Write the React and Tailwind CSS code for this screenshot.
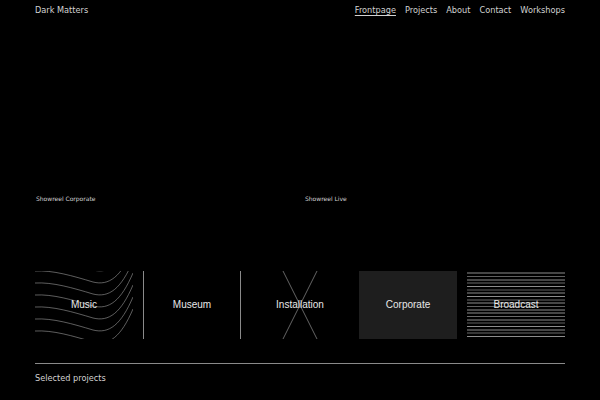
import React from "react";

const font = { fontFamily: '"DejaVu Sans", Verdana, sans-serif' };

const navItems = ["Frontpage", "Projects", "About", "Contact", "Workshops"];

const waveOffsets = [-48, -36, -24, -12, 0, 12, 24, 36, 48, 60];
const broadcastLines = [
  [2, "#c8c8c8"], [5.5, "#8a8a8a"], [9, "#c8c8c8"], [12, "#9a9a9a"], [15.5, "#c8c8c8"],
  [19, "#8a8a8a"], [22, "#c8c8c8"], [25.5, "#c8c8c8"], [29, "#9a9a9a"], [32, "#c8c8c8"],
  [35.5, "#8a8a8a"], [39, "#c8c8c8"], [42, "#c8c8c8"], [45.5, "#9a9a9a"], [49, "#c8c8c8"],
  [52, "#8a8a8a"], [55.5, "#c8c8c8"], [59, "#c8c8c8"], [62, "#9a9a9a"], [65.5, "#c8c8c8"],
];

const Waves = () => (
  <svg viewBox="0 0 98 68" className="absolute inset-0 w-full h-full" preserveAspectRatio="none">
    {waveOffsets.map((k) => (
      <path
        key={k}
        d={`M0,${k} C18,${k - 1} 38,${k + 5} 58,${k + 11} C74,${k + 15} 86,${k + 6} 98,${k - 22}`}
        fill="none"
        stroke="#9c9c9c"
        strokeWidth="0.6"
      />
    ))}
  </svg>
);

const Cross = () => (
  <svg viewBox="0 0 98 68" className="absolute inset-0 w-full h-full" preserveAspectRatio="none">
    <line x1="32" y1="0" x2="66" y2="68" stroke="#8f8f8f" strokeWidth="0.7" />
    <line x1="66" y1="0" x2="32" y2="68" stroke="#8f8f8f" strokeWidth="0.7" />
  </svg>
);

const Stripes = () => (
  <svg viewBox="0 0 98 68" className="absolute inset-0 w-full h-full" preserveAspectRatio="none">
    {broadcastLines.map(([y, c]) => (
      <line key={y} x1="0" y1={y} x2="98" y2={y} stroke={c} strokeWidth="0.7" />
    ))}
  </svg>
);

const Tile = ({ label, children, className = "" }) => (
  <div className={`relative h-[68px] flex items-center justify-center overflow-hidden ${className}`}>
    {children}
    <span className="relative text-[10px] leading-[12px] -mt-px text-[#e8e8e8]" style={{ fontFamily: '"Liberation Sans", Arial, sans-serif' }}>
      {label}
    </span>
  </div>
);

export default function App() {
  return (
    <div className="w-[600px] h-[400px] bg-black overflow-hidden px-[35px] text-[#d2d2d2]" style={font}>
      <header className="h-5 flex items-center justify-between text-[8.2px]">
        <div>Dark Matters</div>
        <nav className="flex gap-[9px]">
          {navItems.map((item, i) => (
            <a key={item} className={i === 0 ? "underline underline-offset-2" : ""}>
              {item}
            </a>
          ))}
        </nav>
      </header>

      <section className="grid grid-cols-2 gap-[10px]">
        <div>
          <div className="h-[174px] bg-black" />
          <div className="text-[6px] leading-[10px] pl-px">Showreel Corporate</div>
        </div>
        <div>
          <div className="h-[174px] bg-black" />
          <div className="text-[6px] leading-[10px]">Showreel Live</div>
        </div>
      </section>

      <section className="mt-[67px] grid grid-cols-5 gap-[10px]">
        <Tile label="Music">
          <Waves />
        </Tile>
        <Tile label="Museum" className="border-l border-r border-[#8a8a8a]" />
        <Tile label="Installation">
          <Cross />
        </Tile>
        <Tile label="Corporate" className="bg-[#1e1e1e]" />
        <Tile label="Broadcast">
          <Stripes />
        </Tile>
      </section>

      <div className="mt-[24px] border-t border-[#8a8a8a]" />
      <div className="mt-[8px] text-[8.2px] leading-[12px]">Selected projects</div>
    </div>
  );
}
